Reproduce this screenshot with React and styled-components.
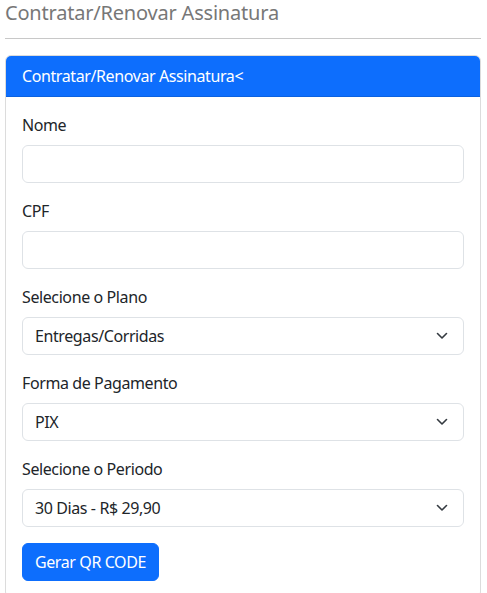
import React, { useState } from 'react'
import styled, { createGlobalStyle } from 'styled-components'

const GlobalStyle = createGlobalStyle`
  body {
    margin: 0;
    background: #fff;
    font-family: "Noto Sans", "Open Sans", sans-serif;
    letter-spacing: -0.4px;
    color: #212529;
  }
  * { box-sizing: border-box; }
`

const Page = styled.div`
  padding: 0 6px 0 5px;
`
const PageTitle = styled.h4`
  margin: 0 0 13px;
  font-size: 20px;
  line-height: 25px;
  font-weight: 400;
  letter-spacing: -0.2px;
  color: #777;
`
const Rule = styled.hr`
  margin: 0 0 16px;
  border: 0;
  border-top: 1px solid #c8c8c8;
`
const Card = styled.div`
  border: 1px solid #dcdcdc;
  border-radius: 6px;
  overflow: hidden;
`
const CardHeader = styled.div`
  background: #0d6efd;
  color: #fff;
  padding: 8px 16px;
  border-bottom: 1px solid #0b62e0;
  font-size: 16px;
  line-height: 24px;
`
const CardBody = styled.form`
  padding: 16px;
`
const Group = styled.div`
  margin-bottom: 16px;
`
const Label = styled.label`
  display: block;
  margin-bottom: 8px;
  font-size: 16px;
  line-height: 24px;
  color: #212529;
`
const Input = styled.input`
  display: block;
  width: 100%;
  height: 38px;
  padding: 6px 12px;
  font: inherit;
  font-size: 16px;
  border: 1px solid #dee2e6;
  border-radius: 6px;
  background: #fff;
  outline: none;
`
const SelectWrap = styled.div`
  position: relative;
`
const Select = styled.select`
  display: block;
  width: 100%;
  height: 38px;
  padding: 6px 36px 6px 12px;
  font: inherit;
  font-size: 16px;
  letter-spacing: -0.4px;
  color: #212529;
  border: 1px solid #dee2e6;
  border-radius: 6px;
  background: #fff;
  appearance: none;
  outline: none;
`
const Chevron = styled.svg`
  position: absolute;
  right: 16px;
  top: 50%;
  transform: translateY(-50%);
  pointer-events: none;
`
const Button = styled.button`
  height: 38px;
  padding: 6px 12px;
  font: inherit;
  font-size: 16px;
  letter-spacing: -0.4px;
  color: #fff;
  background: #0d6efd;
  border: 1px solid #0d6efd;
  border-radius: 6px;
`

function Dropdown({ options, value, onChange }) {
  return (
    <SelectWrap>
      <Select value={value} onChange={e => onChange(e.target.value)}>
        {options.map(o => <option key={o}>{o}</option>)}
      </Select>
      <Chevron width="12" height="8" viewBox="0 0 12 8">
        <path d="M1.5 1.5l4.5 4.5 4.5-4.5" fill="none" stroke="#343a40" strokeWidth="1.6" strokeLinecap="round" strokeLinejoin="round" />
      </Chevron>
    </SelectWrap>
  )
}

function App() {
  const [plano, setPlano] = useState("Entregas/Corridas")
  const [pagamento, setPagamento] = useState("PIX")
  const [periodo, setPeriodo] = useState("30 Dias - R$ 29,90")

  return (
    <Page>
      <GlobalStyle />
      <PageTitle>Contratar/Renovar Assinatura</PageTitle>
      <Rule />
      <Card>
        <CardHeader>Contratar/Renovar Assinatura&lt;</CardHeader>
        <CardBody onSubmit={e => e.preventDefault()}>
          <Group>
            <Label htmlFor='nome'>Nome</Label>
            <Input id='nome' type='text' />
          </Group>
          <Group>
            <Label htmlFor='cpf'>CPF</Label>
            <Input id='cpf' type='text' />
          </Group>
          <Group>
            <Label>Selecione o Plano</Label>
            <Dropdown options={["Entregas/Corridas"]} value={plano} onChange={setPlano} />
          </Group>
          <Group>
            <Label>Forma de Pagamento</Label>
            <Dropdown options={["PIX"]} value={pagamento} onChange={setPagamento} />
          </Group>
          <Group>
            <Label>Selecione o Periodo</Label>
            <Dropdown options={["30 Dias - R$ 29,90"]} value={periodo} onChange={setPeriodo} />
          </Group>
          <Button type='submit'>Gerar QR CODE</Button>
        </CardBody>
      </Card>
    </Page>
  )
}

export default App
